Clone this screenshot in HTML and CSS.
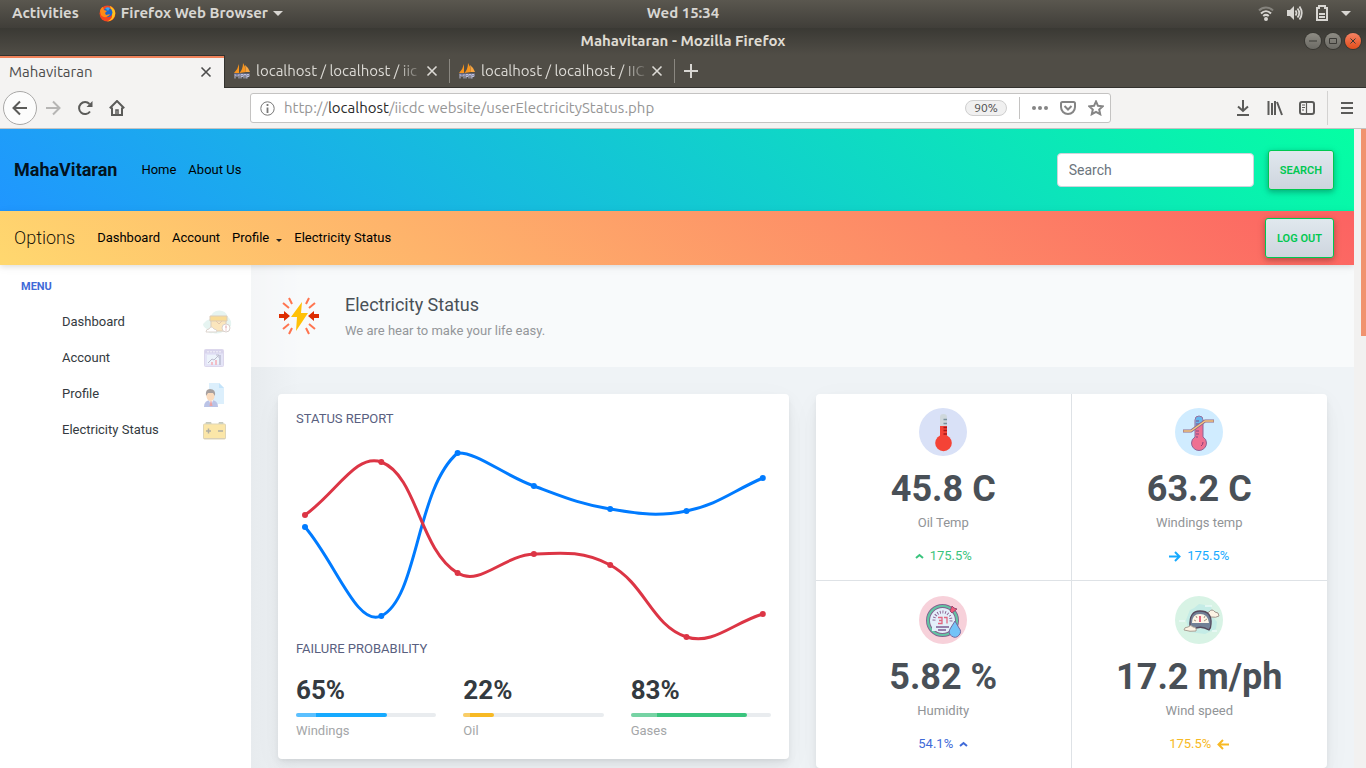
FILE: index.html
```
<!DOCTYPE html>
<html lang="en">
<head>
<meta charset="utf-8">
<title>Mahavitaran</title>
<link rel="stylesheet" href="styles.css">
</head>
<body>
<header class="system-bar">
  <div class="system-left">
    <button class="system-btn" type="button">Activities</button>
    <button class="system-btn" type="button">
      <svg width="17" height="17" viewBox="0 0 17 17" aria-hidden="true"><circle cx="8.500" cy="8.500" r="8" fill="#f5451f"/><path d="M11 1c4 2 6 5 5 9-1 4-4 6.500-8 6.300C13 15 14 11 12.500 7z" fill="#ffc21c"/><circle cx="8.800" cy="7.600" r="4.600" fill="#1f65c9"/><path d="M6 3c2-1 4-1 5 0L9 6z" fill="#37a3ee"/><path d="M1 6c1-3 2-4 3-4l1 3 3 1-2 2 1 2 4-1c-2 4-7 4-9 1z" fill="#ff8a16"/></svg>
      <span>Firefox Web Browser</span>
      <i class="caret"></i>
    </button>
  </div>
  <time class="system-clock">Wed 15:34</time>
  <div class="system-right">
    <svg width="16" height="16" viewBox="0 0 16 16" fill="none" stroke="#d8d6d2" stroke-width="2" aria-hidden="true"><path d="M1 5.500c4-4 10-4 14 0" stroke="#85837d"/><path d="M3 8.500c3-3 7-3 10 0M5.200 11c2-1.600 3.600-1.600 5.600 0"/><circle cx="8" cy="14" r="1" fill="#d8d6d2"/></svg>
    <svg width="17" height="16" viewBox="0 0 17 16" fill="none" stroke="#d8d6d2" stroke-width="1.800" aria-hidden="true"><path d="M1 5h3l4-4v14l-4-4H1z" fill="#d8d6d2" stroke="none"/><path d="M9.500 5.500q2 2.500 0 5M11.500 3.500q3.500 4.500 0 9M13.500 1.500q4.500 6.500 0 13"/></svg>
    <svg width="14" height="18" viewBox="0 0 14 18" fill="none" stroke="#d8d6d2" stroke-width="2" aria-hidden="true"><path d="M2 4h2V2h6v2h2v12H2z"/><path d="M4 10h6M4 13h6"/></svg>
    <i class="caret"></i>
  </div>
</header>

<div class="title-bar">
  <span class="title-text">Mahavitaran - Mozilla Firefox</span>
  <div class="window-buttons">
    <button class="win-btn" type="button" aria-label="Minimize"><svg width="10" height="10" viewBox="0 0 10 10"><path d="M1 5h8"/></svg></button>
    <button class="win-btn" type="button" aria-label="Maximize"><svg width="10" height="10" viewBox="0 0 10 10"><path d="M1.500 2.500h7v5h-7z"/></svg></button>
    <button class="win-btn win-close" type="button" aria-label="Close"><svg width="10" height="10" viewBox="0 0 10 10"><path d="M2.500 2.500l5 5m0-5l-5 5"/></svg></button>
  </div>
</div>

<svg class="symbols" aria-hidden="true">
  <symbol id="close" viewBox="0 0 12 12"><path d="M1.500 1.500l9 9m0-9l-9 9" fill="none" stroke="currentColor" stroke-width="1.600"/></symbol>
  <symbol id="sails" viewBox="0 0 16 16"><path d="M0 10Q4 6 5 1v9zM5.500 10Q9 6 9 0q3 4 3 9z" fill="#f7941d"/><path d="M11 2q4 3 5 7h-4z" fill="#f9a53f"/><path d="M0 10.500h16l-1 2H1z" fill="#777a9e"/><path d="M1 15.500v-4l2 2 2-2v4m2-4v4m0-4h2v2H7m3 2v-4h2v4m1-4v4m0-4h2v2h-2" fill="none" stroke="#c3c6e4" stroke-width=".9"/></symbol>
</svg>

<div class="tab-bar" role="tablist">
  <div class="tab tab-active" role="tab" aria-selected="true">
    <span class="tab-label">Mahavitaran</span>
    <button class="tab-close" type="button" aria-label="Close tab"><svg width="12" height="12"><use href="#close"/></svg></button>
  </div>
  <div class="tab" role="tab">
    <svg width="16" height="16" aria-hidden="true"><use href="#sails"/></svg>
    <span class="tab-label tab-fade">localhost / localhost / iic</span>
    <button class="tab-close" type="button" aria-label="Close tab"><svg width="12" height="12"><use href="#close"/></svg></button>
  </div>
  <div class="tab" role="tab">
    <svg width="16" height="16" aria-hidden="true"><use href="#sails"/></svg>
    <span class="tab-label tab-fade">localhost / localhost / IIC</span>
    <button class="tab-close" type="button" aria-label="Close tab"><svg width="12" height="12"><use href="#close"/></svg></button>
  </div>
  <button class="tab-new" type="button" aria-label="New tab"><svg width="14" height="14" viewBox="0 0 14 14"><path d="M7 0v14M0 7h14" stroke="#d8d6d2" stroke-width="2"/></svg></button>
</div>

<div class="toolbar">
  <div class="tool-nav">
    <button class="back-btn" type="button" aria-label="Back"><svg width="16" height="16" viewBox="0 0 16 16"><path d="M15 8H1.500M8 1.500L1.500 8 8 14.500"/></svg></button>
    <button class="tool-btn tool-off" type="button" aria-label="Forward"><svg width="16" height="16" viewBox="0 0 16 16"><path d="M1 8h13.500M8 1.500L14.500 8 8 14.500"/></svg></button>
    <button class="tool-btn" type="button" aria-label="Reload"><svg width="16" height="16" viewBox="0 0 16 16"><path d="M12.500 4A6 6 0 1 0 13 11.500"/><path d="M15.500 1v6h-6z" fill="#5b5b59" stroke="none"/></svg></button>
    <button class="tool-btn" type="button" aria-label="Home"><svg width="16" height="16" viewBox="0 0 16 16"><path d="M.8 8.200L8 1l7.200 7.200M3 7.500V15h10V7.500"/><path d="M7 15v-5h2v5" stroke-width="1.500"/></svg></button>
  </div>
  <div class="url-bar">
    <svg width="15" height="15" viewBox="0 0 15 15" fill="none" stroke="#777" aria-hidden="true"><circle cx="7.500" cy="7.500" r="6.700"/><path d="M7.500 3v2M7.500 6.500V12" stroke-width="1.800"/></svg>
    <div class="url-text" role="textbox" aria-label="Address">http://<span class="url-host">localhost</span>/iicdc website/userElectricityStatus.php</div>
    <button class="zoom-btn" type="button">90%</button>
    <i class="url-divider"></i>
    <button class="url-btn" type="button" aria-label="Page actions"><svg width="16" height="16" viewBox="0 0 16 16"><circle cx="2" cy="8" r="2"/><circle cx="8" cy="8" r="2"/><circle cx="14" cy="8" r="2"/></svg></button>
    <button class="url-btn" type="button" aria-label="Save to Pocket"><svg class="line-icon" width="16" height="16" viewBox="0 0 16 16"><path d="M2.500 2h11Q15 2 15 3.500V7a7 7 0 0 1-14 0V3.500Q1 2 2.500 2z"/><path d="M4.500 6L8 9.500 11.500 6"/></svg></button>
    <button class="url-btn" type="button" aria-label="Bookmark"><svg class="line-icon" width="16" height="16" viewBox="0 0 16 16"><path d="M8 1.500l2 4.300 4.700.5-3.500 3.200 1 4.700L8 11.800l-4.200 2.400 1-4.700-3.500-3.200 4.700-.5z"/></svg></button>
  </div>
  <div class="tool-right">
    <button class="tool-btn" type="button" aria-label="Downloads"><svg width="16" height="16" viewBox="0 0 16 16"><path d="M8 0v11M3 6.500L8 11l5-4.500M2 15h12"/></svg></button>
    <button class="tool-btn" type="button" aria-label="Library"><svg width="16" height="16" viewBox="0 0 16 16"><path d="M1.500 1v14M5 3v12M8 1v14M10 2l5 13"/></svg></button>
    <button class="tool-btn" type="button" aria-label="Sidebars"><svg width="16" height="16" viewBox="0 0 16 16"><rect x="1" y="2" width="14" height="12" rx="2"/><path d="M7.500 2v12M3 5h3M3 7.500h3M3 10h2" stroke-width="1.200"/></svg></button>
    <i class="menu-divider"></i>
    <button class="tool-btn" type="button" aria-label="Open menu"><svg width="14" height="14" viewBox="0 0 14 14"><path d="M1 2h12M1 7h12M1 12h12"/></svg></button>
  </div>
</div>

<div class="viewport">
  <div class="page">
    <nav class="navbar navbar-top">
      <a class="brand" href="#">MahaVitaran</a>
      <a class="nav-link" href="#">Home</a>
      <a class="nav-link" href="#">About Us</a>
      <form class="search-form">
        <input class="search-input" type="search" placeholder="Search" aria-label="Search">
        <button class="green-btn" type="button">SEARCH</button>
      </form>
    </nav>
    <nav class="navbar navbar-options">
      <a class="options-title" href="#">Options</a>
      <a class="nav-link" href="#">Dashboard</a>
      <a class="nav-link" href="#">Account</a>
      <a class="nav-link nav-drop" href="#">Profile <i class="drop-caret"></i></a>
      <a class="nav-link" href="#">Electricity Status</a>
      <button class="green-btn logout" type="button">LOG OUT</button>
    </nav>

    <div class="columns">
      <aside class="sidebar">
        <h2 class="menu-title">MENU</h2>
        <ul class="menu">
          <li><a class="menu-item" href="#"><span>Dashboard</span>
            <svg width="29" height="26" viewBox="0 0 29 26" aria-hidden="true"><path d="M0 15Q3 11 7 10 8 4 13 2q9-2 12 6 4 3 3 9-3 3-6 4-5 5-12 3Q4 25 4 20 0 18 0 15z" fill="#e6f4f1"/><path d="M8 11h15v11H8z" fill="#fbe6bd" stroke="#dccdbb"/><path d="M7 7h17v5H7z" fill="#f9dc96" stroke="#dccdbb"/><path d="M13 12l3 3 3-3" fill="none" stroke="#e4c8ad"/><path d="M3 23q0-3 3-3 2-4 5 0 3 0 3 3z" fill="#fff" stroke="#ddd5cf"/><circle cx="23" cy="19" r="4" fill="#fff" stroke="#d9d0cc"/><path d="M23 16.500v3M23 20.500v1" stroke="#dd9ba1"/></svg></a></li>
          <li><a class="menu-item" href="#"><span>Account</span>
            <svg width="29" height="20" viewBox="0 0 29 20" aria-hidden="true"><rect x="1.500" y="1.500" width="19" height="17" rx="1" fill="#e4e4f7" stroke="#dcd7ec"/><path d="M2 2h18v3.500H2z" fill="#d8d4ec"/><path d="M4 3.800h14" stroke="#f4f2fa" stroke-dasharray="2 1"/><path d="M4 7h13v9H4z" fill="#edf3fb"/><path d="M5 15l4-4 2 1 5-5m-3 0h3v3" fill="none" stroke="#bcbccd"/><path d="M9 17v-3M13 17v-5" stroke="#f2bdc6" stroke-width="2"/><path d="M17 17V7" stroke="#c6c8dc" stroke-width="2"/></svg></a></li>
          <li><a class="menu-item" href="#"><span>Profile</span>
            <svg width="29" height="26" viewBox="0 0 29 26" aria-hidden="true"><path d="M6 2h10l5 5v16H6z" fill="#dceffc"/><path d="M16 2v5h5z" fill="#c3e3fa"/><path d="M1 26q0-7 7-7t7 7z" fill="#bac3e6"/><path d="M6 19h4l-2 6z" fill="#fff"/><path d="M7.500 20h1l1 5h-3z" fill="#eaa3a3"/><path d="M3.500 13q4-7 8 0v3q-1 4-4 4t-4-4z" fill="#fadbbd"/><path d="M3 15q-1-7 4-7 6 0 5 7l-2-3H5z" fill="#a7a09f"/></svg></a></li>
          <li><a class="menu-item" href="#"><span>Electricity Status</span>
            <svg width="29" height="20" viewBox="0 0 29 20" aria-hidden="true"><path d="M3 4V2.500h5V4M16 4V2.500h4V4" fill="#b9ced0" stroke="#c5c9bd"/><rect x=".5" y="4" width="22" height="15" rx="1" fill="#fbe6a8" stroke="#dfd5b5"/><path d="M3 11h5M5.500 8.500v5M15 11h5" stroke="#b0aea3" stroke-width="1.500"/><path d="M1 18.500h21" stroke="#d8cfb8"/></svg></a></li>
        </ul>
      </aside>

      <main class="content">
        <header class="page-title">
          <svg class="title-icon" width="42" height="38" viewBox="0 0 42 38" aria-hidden="true"><path d="M24 5L13 20h6l-1 14 12-18h-7z" fill="#ffc107"/><path d="M1 17h5v-3l6 5-6 5v-3H1zM41 17h-5v-3l-6 5 6 5v-3h5z" fill="#dd2c00"/><path d="M11 1l3 6M5 6l6 5M31 1l-3 6M37 6l-6 5M11 37l3-6M5 32l6-5M31 37l-3-6M37 32l-6-5" stroke="#ff7550" stroke-width="2"/></svg>
          <div class="title-copy">
            <h1 class="heading">Electricity Status</h1>
            <p class="subheading">We are hear to make your life easy.</p>
          </div>
        </header>

        <div class="cards">
          <section class="card report">
            <h2 class="card-title">STATUS REPORT</h2>
            <svg class="chart" viewBox="0 0 475 212" role="img" aria-label="Status report line chart"></svg>
            <h2 class="card-title">FAILURE PROBABILITY</h2>
            <div class="gauges">
              <div class="gauge gauge-blue">
                <strong class="gauge-value">65%</strong>
                <div class="track" role="progressbar" aria-label="Windings" aria-valuenow="65"><div class="fill" style="width:65%"></div></div>
                <span class="gauge-label">Windings</span>
              </div>
              <div class="gauge gauge-amber">
                <strong class="gauge-value">22%</strong>
                <div class="track" role="progressbar" aria-label="Oil" aria-valuenow="22"><div class="fill" style="width:22%"></div></div>
                <span class="gauge-label">Oil</span>
              </div>
              <div class="gauge gauge-green">
                <strong class="gauge-value">83%</strong>
                <div class="track" role="progressbar" aria-label="Gases" aria-valuenow="83"><div class="fill" style="width:83%"></div></div>
                <span class="gauge-label">Gases</span>
              </div>
            </div>
          </section>

          <section class="card stats">
            <div class="stat">
              <svg width="48" height="48" viewBox="0 0 48 48" aria-hidden="true"><circle cx="24" cy="24" r="24" fill="#d9e1f7"/><path d="M21 9q0-3 3.500-3T28 9v10h-7z" fill="#cfd8dc"/><path d="M21 18h7v11h-7z" fill="#f44336"/><circle cx="24.500" cy="35" r="8.300" fill="#f44336"/><path d="M24.500 11.500H28M24.500 15.500H28" stroke="#78909c" stroke-width="1.500"/><path d="M24.500 19.500H28M24.500 22.500H28M24.500 26H28" stroke="#a61818" stroke-width="1.500"/></svg>
              <strong class="stat-value">45.8 C</strong>
              <span class="stat-label">Oil Temp</span>
              <span class="trend trend-green"><svg width="9" height="6" viewBox="0 0 9 6"><path d="M1 5l3.500-3L8 5"/></svg>175.5%</span>
            </div>
            <div class="stat">
              <svg width="48" height="48" viewBox="0 0 48 48" aria-hidden="true"><circle cx="24" cy="24" r="24" fill="#d0ecff"/><path d="M20 12q0-4 4-4t4 4v17q3.500 2 3.500 6a7.500 7.500 0 0 1-15 0q0-4 3.500-6z" fill="#ee7092" stroke="#8b6799"/><path d="M20.500 12q0-3.500 3.500-3.500t3.500 3.500v4l-7 3z" fill="#67b8ed"/><path d="M21 13h3M21 16h3M21 23h3M21 26h3M21 29h2" stroke="#7f4b85"/><path d="M8 23h8l14-10h9" fill="none" stroke="#8e6a8b" stroke-width="3" stroke-linejoin="round"/><path d="M8.500 23H16l14-10h8.500" fill="none" stroke="#f8c77d" stroke-width="1.500" stroke-linejoin="round"/><path d="M28 34q0 3-2 4" fill="none" stroke="#8b3e78"/></svg>
              <strong class="stat-value">63.2 C</strong>
              <span class="stat-label">Windings temp</span>
              <span class="trend trend-blue"><svg width="12" height="11" viewBox="0 0 12 11"><path d="M0 5.500h10M6 1l4.500 4.500L6 10"/></svg>175.5%</span>
            </div>
            <div class="stat">
              <svg width="48" height="48" viewBox="0 0 48 48" aria-hidden="true"><circle cx="24" cy="24" r="24" fill="#f7d1da"/><circle cx="23.500" cy="24.500" r="14.500" fill="#e3effa" stroke="#83628f" stroke-width="4"/><circle cx="23.500" cy="24.500" r="14.500" fill="none" stroke="#62c5a4" stroke-width="2.200"/><circle cx="23.500" cy="24.500" r="8.500" fill="none" stroke="#895b8e" stroke-width="3" stroke-dasharray="1 2" pathLength="60"/><path d="M13 26h21v9H13zM18 20h12v8H18z" fill="#e3effa"/><path d="M19 21.500h4v6h-4m1-3h3M25 21.500h3v6" fill="none" stroke="#e26680" stroke-width="1.300"/><path d="M17 31h13M19 34h8" stroke="#7d5c93" stroke-width="1.500"/><path d="M31 15l2-5 2 2 3 1-5 4z" fill="#ef5b79" stroke="#994a73"/><path d="M36 25l4 7a5.500 5.500 0 1 1-9 1z" fill="#74c3f7" stroke="#76699f"/></svg>
              <strong class="stat-value">5.82 %</strong>
              <span class="stat-label">Humidity</span>
              <span class="trend trend-indigo">54.1%<svg width="9" height="6" viewBox="0 0 9 6"><path d="M1 5l3.500-3L8 5"/></svg></span>
            </div>
            <div class="stat">
              <svg width="48" height="48" viewBox="0 0 48 48" aria-hidden="true"><circle cx="24" cy="24" r="24" fill="#d8f3e5"/><path d="M15 14q5-2 9-6l12 2 2 11 4 5-1 7-11 5-16-2-3-12z" fill="#c4ece6"/><path d="M4 25h6M30 10h7M37 35h5" stroke="#ecfaf7" stroke-width="1.500"/><path d="M31 20q-1-3 3-4 3-4 6 0 4 0 4 4-3 2-8 1z" fill="#fcf3e4" stroke="#a3988f"/><path d="M15 30q-1-15 10-15 12 0 11 13 0 4-2 6-8-5-15-1-3 1-4-3z" fill="#718096" stroke="#56485b" stroke-width="1.300"/><path d="M17 27q0-9 8-9t9 9z" fill="#fdf5e7"/><path d="M25 20v6" stroke="#e25471" stroke-width="1.800"/><path d="M19 24l2 1M29 25l3-2M21 20l1 2M30 20l-1 2" stroke="#a7967e"/><path d="M9 34q0-3 4-3 3-3 5 0 4 0 3 4-6 1-12-1z" fill="#fcf3e4" stroke="#aaa094"/></svg>
              <strong class="stat-value">17.2 m/ph</strong>
              <span class="stat-label">Wind speed</span>
              <span class="trend trend-amber">175.5%<svg width="12" height="11" viewBox="0 0 12 11"><path d="M12 5.500H2M6 1L1.500 5.500 6 10"/></svg></span>
            </div>
          </section>
        </div>
      </main>
    </div>
  </div>
  <div class="scrollbar"><div class="thumb"></div></div>
</div>
<script src="chart.js"></script>
</body>
</html>
```
FILE: styles.css
```
* { box-sizing: border-box; }
body {
  margin: 0;
  height: 100vh;
  display: flex;
  flex-direction: column;
  overflow: hidden;
  font-family: Roboto, sans-serif;
  font-size: 13px;
  line-height: 20px;
  color: #495057;
}
h1, h2, p, ul { margin: 0; padding: 0; font-weight: 400; }
button { border: 0; padding: 0; background: none; font: inherit; color: inherit; }
a { color: inherit; text-decoration: none; }
svg { flex: none; display: block; }
.symbols { display: none; }

.system-bar, .title-bar, .tab-bar, .toolbar {
  flex: none;
  font-family: Ubuntu, "Noto Sans", sans-serif;
  font-size: 15px;
}
.system-bar {
  display: grid;
  grid-template-columns: 1fr auto 1fr;
  align-items: center;
  height: 28px;
  padding: 0 12px 2px;
  background: linear-gradient(#5a574f, #403e39);
  color: #d8d6d2;
  font-weight: 700;
}
.system-left, .system-right, .system-btn { display: flex; align-items: center; }
.system-left { gap: 20px; }
.system-btn { gap: 5px; }
.system-right { justify-content: flex-end; gap: 12px; padding-right: 3px; }
.caret { border: 5px solid transparent; border-top-color: #d8d6d2; border-bottom: 0; }
.title-bar {
  display: grid;
  grid-template-columns: 1fr auto 1fr;
  align-items: center;
  height: 27px;
  padding: 0 5px 2px;
  background: linear-gradient(#3a3934, #504d46);
  color: #dfdbd2;
  font-weight: 700;
}
.title-text { grid-column: 2; }
.window-buttons { display: flex; justify-content: flex-end; gap: 4px; }
.win-btn {
  display: grid;
  place-items: center;
  width: 16px;
  height: 16px;
  border-radius: 50%;
  background: linear-gradient(#8e8c84, #6b6a64);
  box-shadow: 0 0 0 1px #383732;
}
.win-btn path { fill: none; stroke: #3b3a36; }
.win-close { background: linear-gradient(#f58263, #e24e1b); }

.tab-bar {
  display: flex;
  height: 33px;
  background: #504d46;
  border-bottom: 1px solid #33322e;
  color: #dcdad5;
}
.tab {
  display: flex;
  align-items: center;
  gap: 6px;
  width: 225px;
  padding: 0 12px 0 9px;
  background: linear-gradient(#8a8780, #8a8780) right center / 1px 24px no-repeat;
}
.tab-active {
  height: 33px;
  border-top: 1px solid #33322e;
  border-right: 1px solid #33322e;
  background: linear-gradient(#f0825a 2px, #f4f3f2 2px);
  color: #4c4c4c;
}
.tab-label { flex: 1; overflow: hidden; white-space: nowrap; }
.tab-fade { mask-image: linear-gradient(90deg, #000 86%, transparent 103%); }
.tab-close { width: 12px; height: 12px; }
.tab-new { padding: 0 9px; }

.toolbar {
  display: flex;
  align-items: center;
  height: 41px;
  padding: 0 12px 0 3px;
  background: #f4f3f2;
  border-bottom: 1px solid #c4c3c2;
}
.tool-nav, .tool-right { display: flex; align-items: center; flex: 1; gap: 16px; }
.tool-nav svg, .tool-right svg { fill: none; stroke: #5b5b59; stroke-width: 2; }
.tool-nav { margin-right: 4px; }
.back-btn {
  display: grid;
  place-items: center;
  width: 34px;
  height: 34px;
  margin-right: -8px;
  border: 1px solid #a9a8a7;
  border-radius: 50%;
  background: #fcfcfc;
}
.tool-off { opacity: .4; }
.url-bar {
  display: flex;
  align-items: center;
  width: 64%;
  max-width: 861px;
  height: 30px;
  padding: 0 6px 0 9px;
  border: 1px solid #c4c3c2;
  border-radius: 3px;
  background: #fff;
}
.url-text { flex: 1; padding-left: 9px; overflow: hidden; white-space: nowrap; color: #969696; }
.url-host { color: #2a2a2a; }
.zoom-btn {
  width: 42px;
  height: 16px;
  border: 1px solid #cfcfcf;
  border-radius: 8px;
  background: #f0f0f0;
  font-size: 12px;
  line-height: 14px;
  color: #4c4c4c;
}
.url-divider { width: 1px; height: 22px; margin: 0 0 0 12px; background: #c4c3c2; }
.url-btn { margin-left: 12px; fill: #858585; }
.line-icon { fill: none; stroke: #858585; stroke-width: 2; }
.tool-right { justify-content: flex-end; }
.menu-divider { width: 1px; height: 34px; margin: 0 -4px; background: #d3d2d1; }

.viewport { display: flex; flex: 1; min-height: 0; }
.page { display: flex; flex-direction: column; flex: 1; min-width: 0; overflow: hidden; }
.scrollbar { display: flex; justify-content: flex-end; flex: none; width: 12px; background: #f2f1f0; }
.thumb { width: 5px; height: 207px; background: #f0936f; }

.navbar { display: flex; align-items: center; flex: none; gap: 12px; padding: 0 20px 0 14px; color: #000; }
.navbar-top { height: 82px; background: linear-gradient(40deg, #2096ff, #05ffa3); }
.navbar-options {
  z-index: 1;
  height: 54px;
  background: linear-gradient(40deg, #ffd86f, #fc6262);
  box-shadow: 0 2px 5px rgba(0, 0, 0, .08), 0 2px 10px rgba(0, 0, 0, .06);
}
.brand { margin-right: 12px; font-size: 18px; font-weight: 700; color: rgba(0, 0, 0, .9); }
.options-title { margin-right: 10px; font-size: 18px; font-weight: 300; color: rgba(0, 0, 0, .9); }
.nav-drop { display: flex; align-items: center; gap: 7px; }
.drop-caret { margin-top: 4px; border: 3px solid transparent; border-top-color: #222; border-bottom: 0; }
.search-form { display: flex; align-items: center; gap: 14px; margin-left: auto; }
.search-input {
  width: 197px;
  height: 34px;
  padding: 0 11px;
  border: 1px solid #ced4da;
  border-radius: 4px;
  background: #fff;
  font: 14px Roboto, sans-serif;
}
.search-input::placeholder { color: #6c757d; }
.green-btn {
  height: 40px;
  padding: 1px 11px 0;
  border: 1px solid #00c851;
  border-radius: 3px;
  background: linear-gradient(#e0e8ee, #ced5de);
  box-shadow: 0 2px 5px rgba(0, 0, 0, .2), 0 2px 10px rgba(0, 0, 0, .12);
  font-size: 11px;
  font-weight: 600;
  color: #00c851;
}
.logout { margin-left: auto; }

.columns { display: flex; flex: 1; min-height: 0; }
.sidebar {
  flex: none;
  width: 251px;
  padding: 12px 0 0 21px;
  background: #fff;
}
.menu-title { font-size: 11px; line-height: 20px; font-weight: 700; color: #3f6ad8; }
.menu { margin-top: 7px; list-style: none; }
.menu-item {
  display: flex;
  align-items: center;
  justify-content: space-between;
  height: 36px;
  padding: 0 19px 0 41px;
  color: #343a40;
}
.content {
  flex: 1;
  min-width: 0;
  background: linear-gradient(90deg, #e7ebee, #eff3f6 48px);
}
.page-title {
  display: flex;
  align-items: center;
  gap: 25px;
  height: 102px;
  padding: 0 27px;
  background: rgba(255, 255, 255, .55);
}
.title-copy { padding-top: 4px; }
.heading { font-size: 18px; line-height: 26px; }
.subheading { line-height: 26px; color: #94979a; }
.cards { display: grid; grid-template-columns: 1fr 1fr; align-items: start; gap: 27px; padding: 27px; }
.card {
  border-radius: 4px;
  background: #fff;
  box-shadow: 0 7px 32px rgba(4, 9, 20, .03), 0 14px 20px rgba(4, 9, 20, .03), 0 4px 8px rgba(4, 9, 20, .05), 0 2px 3px rgba(4, 9, 20, .03);
}
.report { padding: 15px 18px 18px; }
.card-title { font-size: 13px; color: #596080; }
.chart { width: 100%; overflow: visible; }
.chart path { fill: none; stroke-width: 3; }
.report .chart + .card-title { margin-top: -2px; }
.gauges { display: grid; grid-template-columns: repeat(3, 1fr); gap: 27px; margin-top: 14px; }
.gauge-value { display: block; font-size: 26px; line-height: 34px; color: #343a40; }
.track { height: 4px; margin: 6px 0 4px; border-radius: 2px; background: #e9ecef; }
.fill { height: 4px; border-radius: 2px; background: linear-gradient(90deg, var(--light) 22%, var(--main) 22%); }
.gauge-blue { --light: #5bc0ff; --main: #16aaff; }
.gauge-amber { --light: #f9cd66; --main: #f7b924; }
.gauge-green { --light: #76d3a4; --main: #3ac47d; }
.gauge-label { color: #a4a6a8; }

.stats { display: grid; grid-template-columns: 1fr 1fr; }
.stat { display: flex; flex-direction: column; align-items: center; height: 187px; padding-top: 14px; }
.stat:nth-child(odd) { border-right: 1px solid #dee2e6; }
.stat:nth-child(-n+2) { border-bottom: 1px solid #dee2e6; }
.stat:nth-child(n+3) { padding-top: 15px; }
.stat-value { margin-top: 12px; font-size: 36px; line-height: 42px; }
.stat-label { margin-top: 3px; color: #919497; }
.trend { display: flex; align-items: center; gap: 6px; margin-top: 13px; }
.trend svg { fill: none; stroke: currentColor; stroke-width: 2; }
.trend-green { color: #3ac47d; }
.trend-blue { color: #16aaff; }
.trend-indigo { color: #3f6ad8; }
.trend-amber { color: #f7b924; }
```
FILE: chart.js
```
const TENSION = 0.4;
const LEFT = 9;
const STEP = 76.3;
const CEILING = 23;

const series = [
  { color: "#007bff", values: [98, 187, 24, 57, 80, 82, 49] },
  { color: "#dc3545", values: [86, 33, 144, 125, 136, 208, 185] }
];

// Control points on both sides of a point, weighted by distance to its neighbours
// and kept below the top edge of the plotting area.
function controls(prev, cur, next) {
  const before = Math.hypot(cur.x - prev.x, cur.y - prev.y);
  const after = Math.hypot(next.x - cur.x, next.y - cur.y);
  const total = before + after || 1;
  const a = TENSION * before / total;
  const b = TENSION * after / total;
  const dx = next.x - prev.x;
  const dy = next.y - prev.y;
  return {
    inX: cur.x - a * dx, inY: Math.max(CEILING, cur.y - a * dy),
    outX: cur.x + b * dx, outY: Math.max(CEILING, cur.y + b * dy)
  };
}

function draw(svg, { color, values }) {
  const ns = "http://www.w3.org/2000/svg";
  const points = values.map((y, i) => ({ x: LEFT + i * STEP, y }));
  const handles = points.map((p, i) => controls(points[i - 1] || p, p, points[i + 1] || p));
  let d = `M${points[0].x} ${points[0].y}`;
  for (let i = 1; i < points.length; i++) {
    const from = handles[i - 1];
    const to = handles[i];
    d += `C${from.outX} ${from.outY} ${to.inX} ${to.inY} ${points[i].x} ${points[i].y}`;
  }
  const line = document.createElementNS(ns, "path");
  line.setAttribute("d", d);
  line.setAttribute("stroke", color);
  svg.append(line);
  for (const p of points) {
    const dot = document.createElementNS(ns, "circle");
    dot.setAttribute("cx", p.x);
    dot.setAttribute("cy", p.y);
    dot.setAttribute("r", 3);
    dot.setAttribute("fill", color);
    svg.append(dot);
  }
}

const chart = document.querySelector(".chart");
series.forEach((s) => draw(chart, s));
```
